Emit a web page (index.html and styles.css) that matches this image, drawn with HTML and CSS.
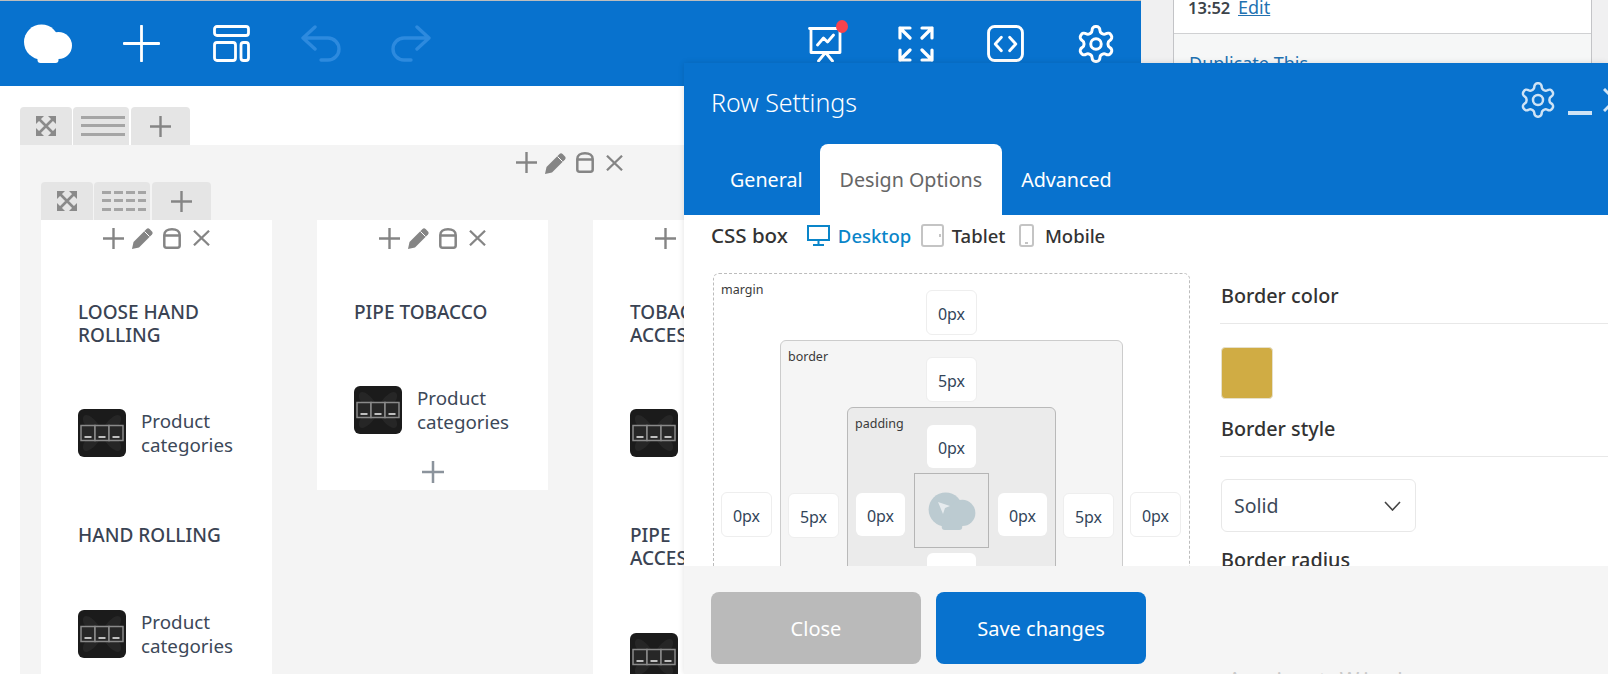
FILE: index.html
```html
<!DOCTYPE html>
<html lang="en">
<head>
<meta charset="utf-8">
<title>Row Settings</title>
<link rel="stylesheet" href="styles.css">
</head>
<body>
<svg class="sprite" aria-hidden="true">
  <symbol id="cloud" viewBox="0 0 48 39"><circle cx="17.5" cy="18" r="17.5"/><circle cx="34.5" cy="21.5" r="13.5"/><rect x="13.5" y="28" width="21" height="11" rx="3"/></symbol>
  <symbol id="gear" viewBox="0 0 24 24"><path fill="none" stroke-linejoin="round" d="M12.22 2h-.44a2 2 0 0 0-2 2v.18a2 2 0 0 1-1 1.73l-.43.25a2 2 0 0 1-2 0l-.15-.08a2 2 0 0 0-2.73.73l-.22.38a2 2 0 0 0 .73 2.73l.15.1a2 2 0 0 1 1 1.72v.51a2 2 0 0 1-1 1.74l-.15.09a2 2 0 0 0-.73 2.73l.22.38a2 2 0 0 0 2.73.73l.15-.08a2 2 0 0 1 2 0l.43.25a2 2 0 0 1 1 1.73V20a2 2 0 0 0 2 2h.44a2 2 0 0 0 2-2v-.18a2 2 0 0 1 1-1.73l.43-.25a2 2 0 0 1 2 0l.15.08a2 2 0 0 0 2.73-.73l.22-.39a2 2 0 0 0-.73-2.73l-.15-.08a2 2 0 0 1-1-1.74v-.5a2 2 0 0 1 1-1.74l.15-.09a2 2 0 0 0 .73-2.73l-.22-.38a2 2 0 0 0-2.73-.73l-.15.08a2 2 0 0 1-2 0l-.43-.25a2 2 0 0 1-1-1.73V4a2 2 0 0 0-2-2z"/><circle fill="none" cx="12" cy="12" r="3"/></symbol>
  <symbol id="plus" viewBox="0 0 21 21"><path fill="none" stroke-width="2.4" d="M10.500 0V21M0 10.500H21"/></symbol>
  <symbol id="pencil" viewBox="0 0 22 22"><path stroke="none" d="M0 22l1.500-7L14.500 2a2.200 2.200 0 0 1 3.100 0l2.400 2.400a2.200 2.200 0 0 1 0 3.100L7 20.500z"/><path fill="none" stroke="#fff" stroke-width="1" d="M12.500 4.500l5 5"/></symbol>
  <symbol id="jar" viewBox="0 0 18 21"><path fill="none" stroke-width="2.500" d="M1.300 7c0-3.500 3-5.700 7.700-5.700s7.700 2.200 7.700 5.700v10.500a2.200 2.200 0 0 1-2.200 2.200H3.500a2.200 2.200 0 0 1-2.200-2.200zM1.300 7.600H16.700"/></symbol>
  <symbol id="cross" viewBox="0 0 18 17"><path fill="none" stroke-width="2.400" d="M1 .8L17 16.200M17 .8L1 16.200"/></symbol>
  <symbol id="expand" viewBox="0 0 20 20"><path stroke="none" d="M0 0h8L0 8zM20 0v8l-8-8zM0 20v-8l8 8zM20 20h-8l8-8z"/><path fill="none" stroke-width="2.600" d="M3 3l14 14M17 3L3 17"/></symbol>
  <symbol id="thumb" viewBox="0 0 48 48">
    <rect width="48" height="48" rx="6" fill="#1b1b1b"/>
    <path fill="#262626" d="M24 22C18 8 6 2 5 9c-1 6 6 12 13 15C11 27 4 33 5 39c1 7 13 1 19-13 6 14 18 20 19 13 1-6-6-12-13-15 7-3 14-9 13-15-1-7-13-1-19 13z"/>
    <g fill="#272727" stroke="#8a8a8a" stroke-width="1.500"><rect x="3" y="16.500" width="14" height="15"/><rect x="17" y="16.500" width="14" height="15"/><rect x="31" y="16.500" width="14" height="15"/></g>
    <path stroke="#f2f2f2" stroke-width="1.500" d="M6.500 28h7M20.500 28h7M34.500 28h7"/>
  </symbol>
</svg>

<div class="page">
  <div class="editor">
    <header class="topbar">
      <div class="tools">
        <svg class="logo"><use href="#cloud"/></svg>
        <svg class="tool plus-tool" viewBox="0 0 37 37"><path d="M18.500 1V36M1 18.500H36"/></svg>
        <svg class="tool layout-tool" viewBox="0 0 37 37"><rect x="1.500" y="1.500" width="34" height="9" rx="2.500"/><rect x="1.500" y="17.500" width="21" height="18" rx="2.500"/><rect x="28" y="17.500" width="7.500" height="18" rx="2.500"/></svg>
        <svg class="tool history undo" viewBox="0 0 40 37"><path d="M14 2L2 13l12 11M2 13h25a11 11 0 0 1 0 22h-7"/></svg>
        <svg class="tool history redo" viewBox="0 0 40 37"><path d="M26 2l12 11-12 11M38 13H13a11 11 0 0 0 0 22h7"/></svg>
      </div>
      <div class="tools tools-right">
        <span class="present">
          <svg class="tool" viewBox="0 0 36 37"><path d="M2 3.500H34M3.500 3.500V27.500H32.500V3.500M10 20l6-7 4 4 6-7M18 27.500L11 36M18 27.500L25 36"/></svg>
          <i class="dot"></i>
        </span>
        <svg class="tool full" viewBox="0 0 36 36"><path d="M2 12V2H12M2 2l10 10M34 12V2H24M34 2L24 12M2 24V34H12M2 34l10-10M34 24V34H24M34 34L24 24"/></svg>
        <svg class="tool" viewBox="0 0 36 36"><rect x="1.500" y="1.500" width="33" height="33" rx="6"/><path d="M14 12l-6 6.500 6 6.500M22 12l6 6.500-6 6.500"/></svg>
        <svg class="gear-top"><use href="#gear"/></svg>
      </div>
    </header>

    <main class="canvas">
      <div class="tabs">
        <span class="tab tab-move"><svg class="ic-expand"><use href="#expand"/></svg></span>
        <span class="tab tab-lines"><i class="lines"></i></span>
        <span class="tab tab-add"><svg class="ic-plus"><use href="#plus"/></svg></span>
      </div>
      <section class="row">
        <div class="controls row-controls">
          <svg class="ic-plus"><use href="#plus"/></svg><svg class="ic-pencil"><use href="#pencil"/></svg><svg class="ic-jar"><use href="#jar"/></svg><svg class="ic-cross"><use href="#cross"/></svg>
        </div>
        <div class="tabs">
          <span class="tab tab-move"><svg class="ic-expand"><use href="#expand"/></svg></span>
          <span class="tab tab-lines"><i class="lines dashed"></i></span>
          <span class="tab tab-add"><svg class="ic-plus"><use href="#plus"/></svg></span>
        </div>
        <div class="columns">
          <article class="column">
            <div class="controls"><svg class="ic-plus"><use href="#plus"/></svg><svg class="ic-pencil"><use href="#pencil"/></svg><svg class="ic-jar"><use href="#jar"/></svg><svg class="ic-cross"><use href="#cross"/></svg></div>
            <h3>LOOSE HAND ROLLING</h3>
            <div class="media"><svg class="thumb"><use href="#thumb"/></svg><span>Product categories</span></div>
            <h3>HAND ROLLING</h3>
            <div class="media"><svg class="thumb"><use href="#thumb"/></svg><span>Product categories</span></div>
          </article>
          <article class="column short">
            <div class="controls"><svg class="ic-plus"><use href="#plus"/></svg><svg class="ic-pencil"><use href="#pencil"/></svg><svg class="ic-jar"><use href="#jar"/></svg><svg class="ic-cross"><use href="#cross"/></svg></div>
            <h3>PIPE TOBACCO</h3>
            <div class="media"><svg class="thumb"><use href="#thumb"/></svg><span>Product categories</span></div>
            <div class="column-add"><svg class="ic-plus"><use href="#plus"/></svg></div>
          </article>
          <article class="column">
            <div class="controls"><svg class="ic-plus"><use href="#plus"/></svg><svg class="ic-pencil"><use href="#pencil"/></svg><svg class="ic-jar"><use href="#jar"/></svg><svg class="ic-cross"><use href="#cross"/></svg></div>
            <h3>TOBACCO ACCESSORIES</h3>
            <div class="media"><svg class="thumb"><use href="#thumb"/></svg><span>Product categories</span></div>
            <h3>PIPE ACCESSORIES</h3>
            <div class="media"><svg class="thumb"><use href="#thumb"/></svg><span>Product categories</span></div>
          </article>
        </div>
      </section>
    </main>
  </div>

  <aside class="side">
    <div class="metabox">
      <div class="meta-top"><b>13:52</b> <a href="#">Edit</a></div>
      <div class="meta-bottom"><a href="#" class="plain">Duplicate This</a></div>
    </div>
  </aside>
</div>

<div class="modal">
  <div class="modal-head">
    <div class="modal-title">
      <h2>Row Settings</h2>
      <div class="modal-actions">
        <svg class="modal-gear"><use href="#gear"/></svg>
        <i class="modal-min"></i>
        <svg class="modal-close" viewBox="0 0 24 24"><path d="M1 1L23 23M23 1L1 23"/></svg>
      </div>
    </div>
    <nav class="modal-tabs">
      <span class="mtab">General</span>
      <span class="mtab active">Design Options</span>
      <span class="mtab">Advanced</span>
    </nav>
  </div>

  <div class="modal-body">
    <div class="device-row">
      <strong class="css-label">CSS box</strong>
      <span class="device on">
        <svg class="dev-ic desktop" viewBox="0 0 23 21"><path d="M1 1h21v14H1zM11.500 15v4M6 20h11"/></svg>Desktop</span>
      <span class="device">
        <svg class="dev-ic tablet" viewBox="0 0 23 23"><rect x="1" y="1" width="21" height="21" rx="2"/><path d="M19 10v3"/></svg>Tablet</span>
      <span class="device">
        <svg class="dev-ic mobile" viewBox="0 0 15 23"><rect x="1" y="1" width="13" height="21" rx="2"/><path d="M6 19h3"/></svg>Mobile</span>
    </div>

    <div class="design-grid">
      <div class="cssbox margin-box">
        <span class="box-label">margin</span>
        <div class="val val-top">0px</div>
        <div class="box-mid">
          <div class="val val-side">0px</div>
          <div class="cssbox border-box">
            <span class="box-label">border</span>
            <div class="val val-top">5px</div>
            <div class="box-mid">
              <div class="val val-side">5px</div>
              <div class="cssbox padding-box">
                <span class="box-label">padding</span>
                <div class="val val-top bare">0px</div>
                <div class="box-mid">
                  <div class="val val-side bare">0px</div>
                  <div class="content-box">
                    <span class="logo-wrap">
                      <svg class="content-logo"><use href="#cloud"/></svg>
                      <svg class="content-arrow" viewBox="0 0 12 12"><path d="M0 0l12 4-5 2-2 6z"/></svg>
                    </span>
                  </div>
                  <div class="val val-side bare">0px</div>
                </div>
                <div class="val val-top bare">0px</div>
              </div>
              <div class="val val-side">5px</div>
            </div>
          </div>
          <div class="val val-side">0px</div>
        </div>
      </div>

      <div class="props">
        <h4>Border color</h4>
        <i class="swatch"></i>
        <h4>Border style</h4>
        <div class="select">Solid<svg class="chev" viewBox="0 0 17 10"><path d="M1 1l7.500 8L16 1"/></svg></div>
        <h4>Border radius</h4>
      </div>
    </div>
  </div>

  <div class="modal-foot">
    <button class="btn btn-close">Close</button>
    <button class="btn btn-save">Save changes</button>
    <span class="ghost">Ancient Wind</span>
  </div>
</div>
</body>
</html>
```

FILE: styles.css
```css
* { box-sizing: border-box; }
html, body { margin: 0; height: 100%; }
body {
  width: 1608px;
  height: 674px;
  overflow: hidden;
  position: relative;
  background: #f0f0f1;
  font-family: "Noto Sans", "Open Sans", "Liberation Sans", sans-serif;
  color: #333;
}
.sprite { position: absolute; width: 0; height: 0; }
i { display: block; }

.page { display: flex; height: 674px; }
.editor { width: 1141px; flex: none; background: #fff; height: 674px; overflow: hidden; }

/* top bar */
.topbar {
  height: 86px;
  border-top: 1px solid #bdbdbd;
  background: #0872ce;
  display: flex;
  justify-content: space-between;
  align-items: center;
  padding: 0 27px 0 24px;
}
.tools { display: flex; align-items: center; }
.logo { width: 48px; height: 39px; fill: #fff; margin-right: 51px; }
.tool { width: 37px; height: 37px; fill: none; stroke: #fff; stroke-width: 2.800; stroke-linecap: round; stroke-linejoin: round; display: block; }
.plus-tool { margin-right: 53px; }
.layout-tool { margin-right: 51px; }
.history { width: 40px; stroke: #2d8ade; stroke-width: 3.400; }
.undo { margin-right: 50px; }
.tools-right { gap: 54px; }
.present { position: relative; display: block; width: 36px; height: 37px; }
.dot { position: absolute; top: -5px; right: -5px; width: 12px; height: 13px; border-radius: 50%; background: #f8434c; }
.full { width: 36px; height: 36px; margin: 0 -1px 0 1px; stroke-width: 3.200; }
.gear-top { width: 42px; height: 42px; fill: none; stroke: #fff; stroke-width: 1.700; margin: 0 -3px; }

/* builder */
.canvas { padding: 21px 0 0 20px; }
.tabs { display: flex; height: 38px; gap: 1px; }
.tab {
  height: 38px;
  background: #e5e5e5;
  border-radius: 4px 4px 0 0;
  display: flex;
  align-items: center;
  justify-content: center;
}
.tab-move { width: 52px; }
.tab-lines { width: 56px; padding-left: 4px; }
.tab-add { width: 59px; margin-left: 1px; }
.lines {
  width: 44px;
  height: 20px;
  border-top: 3px solid #a5a5a5;
  border-bottom: 3px solid #a5a5a5;
  position: relative;
}
.lines::after { content: ""; position: absolute; left: 0; right: 0; top: 5px; height: 3px; background: #a5a5a5; }
.lines.dashed {
  border: 0;
  height: 20px;
  background: repeating-linear-gradient(90deg, #a5a5a5 0 9px, transparent 9px 12px) 0 0 / 100% 3px no-repeat,
              repeating-linear-gradient(90deg, #a5a5a5 0 9px, transparent 9px 12px) 0 8px / 100% 3px no-repeat,
              repeating-linear-gradient(90deg, #a5a5a5 0 9px, transparent 9px 12px) 0 17px / 100% 3px no-repeat;
}
.lines.dashed::after { display: none; }
.ic-expand { width: 20px; height: 20px; fill: #8a8a8a; stroke: #8a8a8a; }
.ic-plus { width: 21px; height: 21px; fill: none; stroke: #858585; display: block; }
.ic-pencil { width: 22px; height: 22px; fill: #858585; stroke: none; display: block; margin-left: -1px; }
.ic-jar { width: 18px; height: 21px; fill: none; stroke: #858585; display: block; }
.ic-cross { width: 17px; height: 16px; fill: none; stroke: #858585; display: block; margin-left: 3px; }

.row { background: #f4f4f4; padding: 0 0 0 21px; min-height: 529px; }
.controls { display: flex; align-items: center; justify-content: center; gap: 9px; height: 37px; }
.row-controls { height: 37px; width: 1121px; justify-content: flex-start; padding: 0 0 2px 496px; margin-left: -21px; }

.columns { display: flex; gap: 45px; align-items: flex-start; }
.column { width: 231px; flex: none; background: #fff; padding: 0 37px; min-height: 460px; }
.column.short { min-height: 0; }
.column > .controls { margin: 0 -37px; height: 38px; padding-bottom: 2px; }
.column h3 {
  margin: 67px 0 0;
  font-size: 19px;
  line-height: 23px;
  font-weight: 500;
  color: #3a4353;
}
.column > h3:first-of-type { margin: 43px 0 -1px; }
.media { display: flex; align-items: center; gap: 15px; margin-top: 63px; font-size: 18.800px; line-height: 24px; color: #3c4858; }
.media span { display: block; width: 105px; }
.thumb { width: 48px; height: 48px; flex: none; display: block; }
.column-add { display: flex; justify-content: center; padding: 27px 0 7px; }
.column-add .ic-plus { width: 22px; height: 22px; stroke: #8b939c; }

/* WP side */
.side { flex: 1; padding-left: 32px; padding-right: 16px; }
.metabox { border: 1px solid #c3c4c7; border-top: 0; height: 200px; background: #f6f7f7; }
.meta-top { height: 34px; background: #fff; border-bottom: 1px solid #d0d1d3; padding-left: 14px; font-size: 18px; line-height: 15px; color: #3c434a; }
.meta-top b { font-weight: 600; font-size: 16.500px; margin-right: 3px; }
.meta-top a { color: #2271b1; }
.meta-bottom { padding: 18px 0 0 15px; font-size: 18px; line-height: 22px; }
.plain { color: #2271b1; text-decoration: none; }

/* modal */
.modal {
  position: absolute;
  left: 684px;
  top: 63px;
  width: 924px;
  height: 611px;
  display: flex;
  flex-direction: column;
  background: #fff;
  box-shadow: 0 0 6px rgba(0,0,0,.12);
}
.modal-head { height: 152px; background: #0872ce; flex: none; display: flex; flex-direction: column; justify-content: space-between; overflow: hidden; }
.modal-title { display: flex; justify-content: space-between; align-items: center; padding: 19px 0 0 27px; }
.modal-title h2 { margin: 0; font-size: 25px; line-height: 34px; font-weight: 300; color: #fff; }
.modal-actions { display: flex; align-items: center; width: 87px; flex: none; gap: 10px; position: relative; top: -2px; }
.modal-gear { width: 40px; height: 40px; fill: none; stroke: #cfe3f5; stroke-width: 1.500; flex: none; margin-left: -3px; }
.modal-min { width: 24px; height: 4px; background: #cfe3f5; flex: none; position: relative; top: 13px; }
.modal-close { width: 24px; height: 24px; fill: none; stroke: #cfe3f5; stroke-width: 3; flex: none; margin-left: 1px; }
.modal-tabs { display: flex; padding-left: 27px; height: 71px; align-items: stretch; }
.mtab { font-size: 19.700px; color: #fff; padding: 0 19px; display: flex; align-items: center; }
.mtab.active { background: #fff; color: #666; border-radius: 8px 8px 0 0; margin-left: -2px; padding: 0 20px; }

.modal-body { flex: 1; overflow: hidden; padding: 0 0 0 29px; }
.device-row { display: flex; align-items: center; height: 58px; padding-bottom: 18px; margin-left: -2px; color: #333; font-size: 18.500px; font-weight: 500; }
.css-label { font-weight: 500; margin-right: 19px; font-size: 20.500px; }
.device { display: flex; align-items: center; gap: 8px; margin-right: 9.500px; }
.device.on { color: #0a85c9; }
.dev-ic { height: 23px; width: 23px; fill: none; stroke: #c4c4c4; stroke-width: 2; flex: none; }
.dev-ic.mobile { width: 15px; margin-left: 4px; margin-right: 3px; }
.desktop { stroke: #0a85c9; }

.design-grid { display: flex; align-items: flex-start; }
.cssbox { position: relative; border-radius: 6px; display: flex; flex-direction: column; align-items: center; }
.margin-box { width: 477px; height: 400px; border: 1px dashed #bcbcbc; padding: 16px 8px 0; flex: none; }
.border-box { width: 343px; border: 1px solid #ccc; background: #f5f5f5; padding: 16px 8px 0; margin-top: 5px; flex: none; }
.padding-box { width: 209px; border: 1px solid #b9b9b9; background: #ebebeb; padding: 17px 8px 0; margin-top: 5px; flex: none; }
.box-label { position: absolute; left: 7px; top: 7px; font-size: 12.500px; line-height: 18px; color: #3a3a3a; }
.box-mid { display: flex; justify-content: space-between; align-items: center; width: 100%; margin-top: 5px; }
.border-box > .box-mid, .margin-box > .box-mid { align-items: flex-start; margin-top: 0; }
.val {
  width: 51px;
  height: 45px;
  flex: none;
  background: #fff;
  border: 1px solid #eee;
  border-radius: 6px;
  display: flex;
  align-items: center;
  justify-content: center;
  font-size: 16px;
  color: #33455a;
  padding-top: 2px;
}
.val.bare { border: 0; width: 49px; height: 43px; }
.val-side.bare { margin-top: 8px; }
.margin-box > .box-mid > .val { margin-top: 157px; }
.border-box > .box-mid > .val { margin-top: 91px; }
.margin-box > .box-mid > .val:first-child, .border-box > .box-mid > .val:first-child { margin-left: -1px; margin-right: 1px; }
.content-box { width: 75px; height: 75px; border: 1px solid #b5b5b5; display: flex; align-items: center; justify-content: center; flex: none; }
.logo-wrap { position: relative; display: block; width: 48px; height: 38px; }
.content-logo { width: 48px; height: 38px; fill: #bccbd1; display: block; }
.content-arrow { position: absolute; left: 10px; top: 10px; width: 12px; height: 12px; fill: #e6ebee; }
.padding-box > .box-mid { margin-top: 5px; margin-bottom: 5px; }

.props { flex: 1; padding: 0 0 0 30px; }
.props h4 { margin: 0; font-size: 19.800px; font-weight: 500; color: #333; height: 51px; line-height: 46px; border-bottom: 1px solid #e8e8e8; padding-left: 1px; }
.swatch { width: 52px; height: 52px; margin: 23px 0 7px 1px; background: #d0ac44; border-radius: 4px; border: 1px solid #e6e0cc; }
.select { width: 195px; height: 53px; border: 1px solid #e8e8e8; border-radius: 6px; margin: 22px 0 5px 1px; padding-left: 12px; font-size: 19.500px; line-height: 51px; color: #3c4858; position: relative; }
.chev { position: absolute; right: 14px; top: 21px; width: 17px; height: 10px; fill: none; stroke: #444; stroke-width: 1.600; }

.modal-foot { height: 108px; flex: none; background: #f5f5f5; display: flex; gap: 15px; padding: 26px 0 0 27px; position: relative; overflow: hidden; }
.btn { width: 210px; height: 72px; border: 0; border-radius: 8px; color: #fff; font: 400 20px "Noto Sans", "Open Sans", sans-serif; }
.btn-close { background: #bababa; }
.btn-save { background: #0872ce; }
.ghost { position: absolute; left: 544px; top: 100px; font-size: 21px; letter-spacing: 4px; color: #c9c9c9; }
```
